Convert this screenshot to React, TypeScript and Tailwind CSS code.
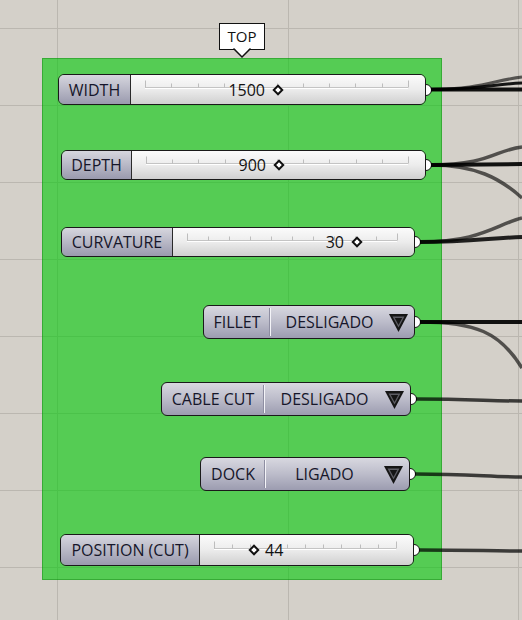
import React from "react";

const FONT = "font-['Open_Sans','Noto_Sans',sans-serif]";

function Track({ w, h }: { w: number; h: number }) {
  const x0 = 14;
  const x1 = w - 16;
  const y = Math.round(h / 2) - 1.5;
  const n = 10;
  const ticks: number[] = [];
  for (let i = 0; i <= n; i++) ticks.push(x0 + ((x1 - x0) * i) / n);
  return (
    <svg className="absolute inset-0" width={w} height={h}>
      <line x1={x0} y1={y} x2={x1} y2={y} stroke="#c4c4c4" strokeWidth="1" />
      <line x1={x0} y1={y + 1} x2={x1} y2={y + 1} stroke="#ffffff" strokeWidth="1" />
      {ticks.map((x, i) => (
        <line
          key={i}
          x1={Math.round(x) + 0.5}
          y1={i === 0 || i === n ? y - 7 : y - 4}
          x2={Math.round(x) + 0.5}
          y2={y}
          stroke="#bdbdbd"
          strokeWidth="1"
        />
      ))}
    </svg>
  );
}

function Grip() {
  return (
    <div className="absolute right-[-6px] top-1/2 -translate-y-1/2 w-[12px] h-[12px] rounded-full bg-white border-[1.5px] border-[#111]" />
  );
}

function Diamond() {
  return (
    <div className="w-[8px] h-[8px] rotate-45 bg-white border-[2px] border-[#111]" />
  );
}

function Slider({
  label,
  className,
  labelCls,
  areaW,
  h,
  grip,
  value,
  after,
}: {
  label: string;
  className: string;
  labelCls: string;
  areaW: number;
  h: number;
  grip: number;
  value: string;
  after?: boolean;
}) {
  return (
    <div className={`relative shrink-0 ${className}`}>
      <Grip />
      <div className="relative flex h-full rounded-[6px] border-[1.5px] border-[#1a1a1a] overflow-hidden">
        <div
          className={`${labelCls} shrink-0 flex items-center justify-center bg-linear-to-b from-[#d6d6de] via-[#b8b8c6] to-[#9a9aae] border-r-[1.5px] border-[#2a2a2a] text-[16px] text-[#16162a]`}
        >
          {label}
        </div>
        <div className="relative flex-1 bg-linear-to-b from-[#fbfbfb] via-[#ececec] to-[#d0d0d0]">
          <Track w={areaW} h={h} />
          <div
            className="absolute top-1/2 -translate-y-1/2 -translate-x-1/2"
            style={{ left: grip }}
          >
            <Diamond />
          </div>
          {after ? (
            <div
              className="absolute top-0 bottom-0 flex items-center text-[16px] text-[#111]"
              style={{ left: grip + 11 }}
            >
              {value}
            </div>
          ) : (
            <div
              className="absolute top-0 bottom-0 flex items-center text-[16px] text-[#111]"
              style={{ right: areaW - grip + 14 }}
            >
              {value}
            </div>
          )}
        </div>
      </div>
    </div>
  );
}

function Triangle() {
  return (
    <svg width="21" height="21" viewBox="0 0 21 21" className="shrink-0 mr-[5px]">
      <polygon points="1,2 20,2 10.5,20" fill="#151515" />
      <polygon points="4.5,4.5 16.5,4.5 10.5,15.5" fill="#5d5d64" />
      <polygon points="6.8,6 14.2,6 10.5,13" fill="#151515" />
    </svg>
  );
}

function ValueList({
  label,
  value,
  className,
  labelCls,
}: {
  label: string;
  value: string;
  className: string;
  labelCls: string;
}) {
  return (
    <div className={`relative shrink-0 ${className}`}>
      <Grip />
      <div className="relative flex h-full items-center rounded-[6px] border-[1.5px] border-[#1a1a1a] bg-linear-to-b from-[#d8d8e0] via-[#bcbcca] to-[#9c9cb0] text-[16px] text-[#16162a]">
        <div className={`${labelCls} shrink-0 flex items-center justify-center`}>{label}</div>
        <div className="w-px h-[28px] bg-[#f4f4f8] shadow-[-1px_0_0_#8e8ea2]" />
        <div className="flex-1 text-center">{value}</div>
        <Triangle />
      </div>
    </div>
  );
}

export default function App() {
  const hLines = [28, 105, 182, 259, 336, 413, 490, 567];
  const vLines = [57, 288, 518];
  return (
    <div className={`relative w-[522px] h-[620px] overflow-hidden bg-[#d4d0c9] ${FONT}`}>
      {/* canvas grid */}
      <svg className="absolute inset-0" width="522" height="620">
        {hLines.map((y) => (
          <line key={"h" + y} x1="0" x2="522" y1={y + 0.5} y2={y + 0.5} stroke="#bbb7b0" strokeWidth="1" />
        ))}
        {vLines.map((x) => (
          <line key={"v" + x} y1="0" y2="620" x1={x + 0.5} x2={x + 0.5} stroke="#bbb7b0" strokeWidth="1" />
        ))}
      </svg>

      {/* group */}
      <div className="absolute left-[42px] top-[58px] w-[400px] h-[522px] bg-[rgba(0,201,7,0.6)] shadow-[inset_0_0_0_1px_rgba(0,110,0,0.35)] flex flex-col items-start">
        <Slider
          label="WIDTH"
          className="ml-[16px] mt-[16px] w-[368px] h-[31px]"
          labelCls="w-[72px]"
          areaW={293}
          h={28}
          grip={147}
          value="1500"
        />
        <Slider
          label="DEPTH"
          className="ml-[19px] mt-[45px] w-[365px] h-[30px]"
          labelCls="w-[70px]"
          areaW={292}
          h={27}
          grip={147}
          value="900"
        />
        <Slider
          label="CURVATURE"
          className="ml-[19px] mt-[47px] w-[354px] h-[30px]"
          labelCls="w-[111px]"
          areaW={240}
          h={27}
          grip={184}
          value="30"
        />
        <ValueList
          label="FILLET"
          value="DESLIGADO"
          className="ml-[161px] mt-[48px] w-[212px] h-[34px]"
          labelCls="w-[66px]"
        />
        <ValueList
          label="CABLE CUT"
          value="DESLIGADO"
          className="ml-[119px] mt-[43px] w-[250px] h-[34px]"
          labelCls="w-[102px]"
        />
        <ValueList
          label="DOCK"
          value="LIGADO"
          className="ml-[158px] mt-[41px] w-[210px] h-[34px]"
          labelCls="w-[64px]"
        />
        <Slider
          label="POSITION (CUT)"
          className="ml-[18px] mt-[43px] w-[354px] h-[32px]"
          labelCls="w-[139px]"
          areaW={212}
          h={29}
          grip={54}
          value="44"
          after
        />
      </div>

      {/* wires */}
      <svg className="absolute inset-0 pointer-events-none" width="522" height="620" fill="none">
        <path d="M431,89.5 C480,89.5 495,80 522,77" stroke="rgba(0,0,0,0.6)" strokeWidth="3" />
        <path d="M431,89.5 C480,89.5 495,84 522,83" stroke="rgba(0,0,0,0.9)" strokeWidth="3" />
        <path d="M431,89.5 L522,89.5" stroke="rgba(0,0,0,0.92)" strokeWidth="4" />

        <path d="M431,165 C490,165 495,150 522,147" stroke="rgba(0,0,0,0.62)" strokeWidth="3.5" />
        <path d="M431,165 C475,165 500,178 522,198" stroke="rgba(0,0,0,0.62)" strokeWidth="3.5" />
        <path d="M431,165 L522,164" stroke="rgba(0,0,0,0.92)" strokeWidth="4" />

        <path d="M420,242 C480,242 495,225 522,218" stroke="rgba(0,0,0,0.62)" strokeWidth="3.5" />
        <path d="M420,242 C470,242 490,238 522,237" stroke="rgba(0,0,0,0.85)" strokeWidth="4" />

        <path d="M420,322 C475,322 500,332 522,368" stroke="rgba(0,0,0,0.62)" strokeWidth="3.5" />
        <path d="M420,322 L522,322" stroke="rgba(0,0,0,0.92)" strokeWidth="4" />

        <path d="M416,399 C470,399 490,401 522,401" stroke="rgba(0,0,0,0.72)" strokeWidth="3.5" />
        <path d="M415,474 C470,474 490,477 522,477" stroke="rgba(0,0,0,0.72)" strokeWidth="3.5" />
        <path d="M419,550 C470,550 490,551 522,551" stroke="rgba(0,0,0,0.72)" strokeWidth="3.5" />
      </svg>

      {/* TOP label */}
      <div className="absolute left-[219px] top-[23px] w-[46px] h-[27px] bg-white border-[1.5px] border-[#111] flex items-center justify-center text-[15px] text-[#111]">
        TOP
      </div>
      <svg className="absolute left-[233px] top-[47px]" width="18" height="12" viewBox="0 0 18 12">
        <polygon points="0,0 18,0 9,10" fill="white" />
        <polyline points="0.5,1.5 9,10 17.5,1.5" stroke="#111" strokeWidth="1.5" fill="none" />
      </svg>
    </div>
  );
}
